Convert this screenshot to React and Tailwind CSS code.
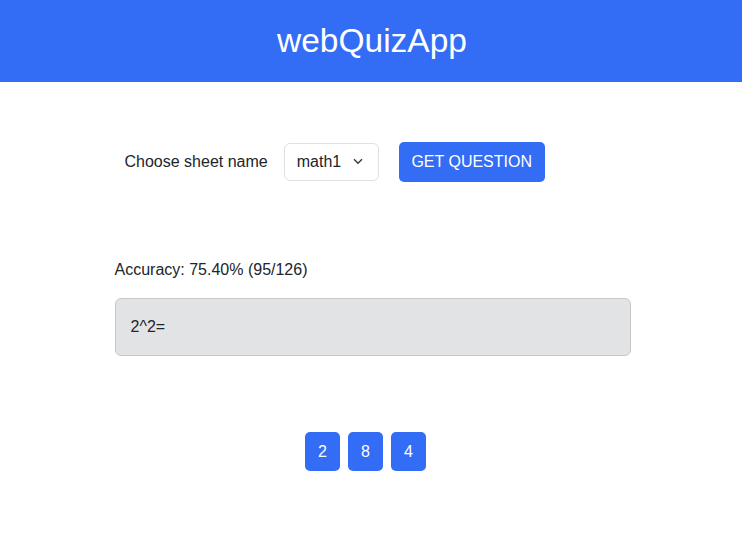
import { useState } from "react";

const answers = ["2", "8", "4"];

export default function App() {
  const [sheet, setSheet] = useState("math1");

  return (
    <div className="min-h-screen bg-white font-['Liberation_Sans',Arial,sans-serif] text-[#212529]">
      {/* Header */}
      <header className="mr-[3px] flex h-[82px] items-center justify-center bg-[#346DF5]">
        <h1 className="ml-[2px] text-[33.5px] leading-none text-white">webQuizApp</h1>
      </header>

      <main className="mx-auto w-[516px]">
        {/* Sheet select */}
        <div className="mt-[60px] flex items-center pl-[10px]">
          <span className="text-base">Choose sheet name</span>
          <div className="relative ml-4">
            <select
              value={sheet}
              onChange={(e) => setSheet(e.target.value)}
              className="h-[38px] w-[95px] appearance-none rounded-md border border-[#dee2e6] bg-white pl-[12px] text-base text-[#212529] outline-none"
            >
              <option value="math1">math1</option>
              <option value="math2">math2</option>
            </select>
            <svg
              className="pointer-events-none absolute right-[16px] top-[15px]"
              width="10"
              height="7"
              viewBox="0 0 10 7"
              fill="none"
              stroke="#343a40"
              strokeWidth="1.4"
            >
              <path d="M1 1.2l4 4 4-4" />
            </svg>
          </div>
          <button className="ml-[20px] h-[40px] w-[146px] rounded-[5px] bg-[#346DF5] text-base text-white">
            GET QUESTION
          </button>
        </div>

        {/* Accuracy */}
        <p className="mt-[78px] text-base leading-5">Accuracy: 75.40% (95/126)</p>

        {/* Question */}
        <div className="mt-[18px] flex h-[58px] items-center rounded-md border border-[#c6c8ca] bg-[#e2e3e5] px-[15px] text-base">
          2^2=
        </div>

        {/* Answers */}
        <div className="mt-[76px] flex justify-center gap-2 pr-[14px]">
          {answers.map((a) => (
            <button
              key={a}
              className="h-[39px] w-[35px] rounded-[5px] bg-[#346DF5] text-base text-white"
            >
              {a}
            </button>
          ))}
        </div>
      </main>
    </div>
  );
}
